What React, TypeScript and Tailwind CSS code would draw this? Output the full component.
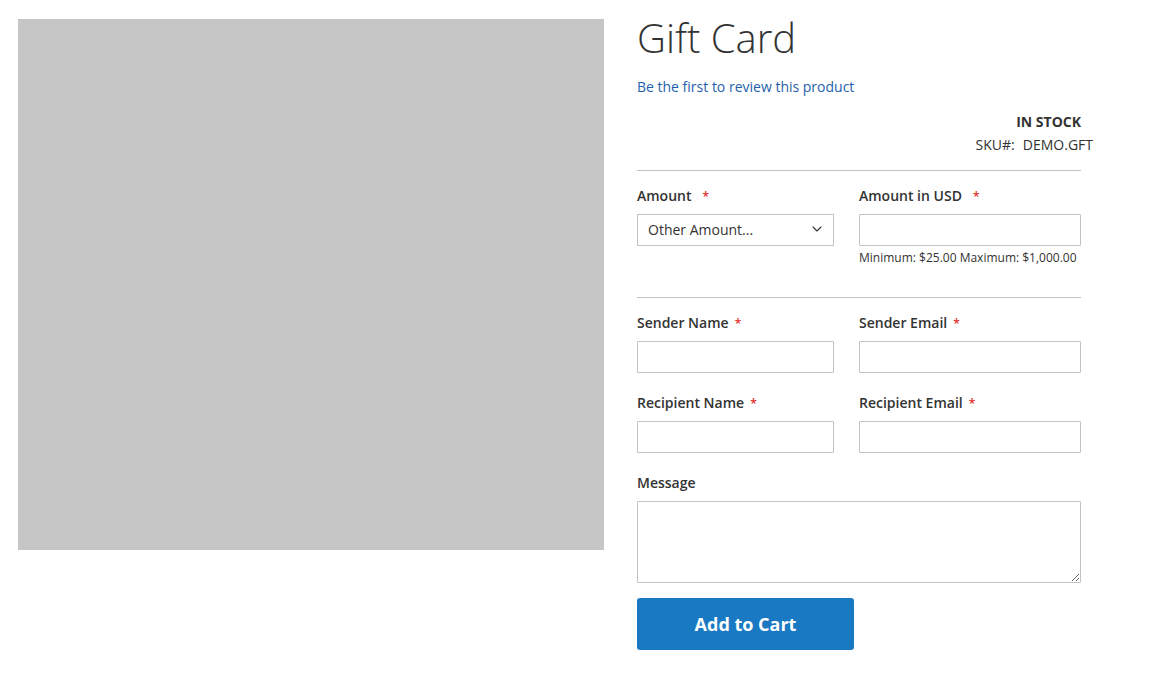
import { ChevronDown } from 'lucide-react';

function Label({ text, required = true, gap = 'ml-[9px]' }: { text: string; required?: boolean; gap?: string }) {
  return (
    <div className="h-5 text-[14px] leading-5 font-semibold text-[#333]">
      {text}
      {required && <span className={`${gap} text-[#e02b27] text-[12px]`}>*</span>}
    </div>
  );
}

function TextInput() {
  return <input type="text" className="block w-full h-8 border border-[#c2c2c2] rounded-[1px] bg-white px-2 text-[14px] outline-none" />;
}

export default function App() {
  return (
    <div className="min-h-[673px] bg-white text-[#333]" style={{ fontFamily: '"Open Sans", "Liberation Sans", sans-serif' }}>
      <div className="flex pl-[18px] pt-[19px]">
        {/* Product image placeholder */}
        <div className="w-[586px] h-[531px] bg-[#c6c6c6] shrink-0" />

        {/* Product info */}
        <div className="ml-[33px] w-[456px]">
          <h1 className="-mt-[3px] text-[40px] leading-[44px] font-light text-[#333]">Gift Card</h1>
          <a href="#" className="block mt-[17px] h-5 text-[14px] leading-5 text-[#1f5fab]">
            Be the first to review this product
          </a>

          <div className="w-[444px] mt-[15px] text-right text-[14px] leading-5 font-bold uppercase">In stock</div>
          <div className="mt-[3px] text-right text-[14px] leading-5">
            SKU#:<span className="ml-[8px]">DEMO.GFT</span>
          </div>

          <div className="w-[444px] mt-[15px] border-t border-[#c1c1c1]" />

          {/* Amount */}
          <div className="w-[444px] flex gap-[25px] mt-[15px]">
            <div className="w-[197px]">
              <Label text="Amount" gap="ml-[11px]" />
              <div className="mt-[8px] h-8 border border-[#c2c2c2] flex items-center justify-between pl-[10px] pr-[8px] pb-[2px] text-[14px]">
                <span>Other Amount...</span>
                <ChevronDown size={16} strokeWidth={1.6} className="text-[#333]" />
              </div>
            </div>
            <div className="flex-1">
              <Label text="Amount in USD" gap="ml-[11px]" />
              <div className="mt-[8px]">
                <TextInput />
              </div>
              <div className="mt-[4px] text-[12px] leading-4">Minimum: $25.00 Maximum: $1,000.00</div>
            </div>
          </div>

          <div className="w-[444px] mt-[31px] border-t border-[#c1c1c1]" />

          {/* Sender / recipient */}
          <div className="w-[444px] grid grid-cols-[197px_1fr] gap-x-[25px] mt-[15px]">
            <div>
              <Label text="Sender Name" gap="ml-[6px]" />
              <div className="mt-[8px]"><TextInput /></div>
            </div>
            <div>
              <Label text="Sender Email" gap="ml-[6px]" />
              <div className="mt-[8px]"><TextInput /></div>
            </div>
            <div className="mt-[20px]">
              <Label text="Recipient Name" gap="ml-[6px]" />
              <div className="mt-[8px]"><TextInput /></div>
            </div>
            <div className="mt-[20px]">
              <Label text="Recipient Email" gap="ml-[6px]" />
              <div className="mt-[8px]"><TextInput /></div>
            </div>
          </div>

          {/* Message */}
          <div className="w-[444px] mt-[20px]">
            <Label text="Message" required={false} />
            <textarea className="block mt-[8px] w-full h-[82px] border border-[#c2c2c2] rounded-[1px] bg-white outline-none resize-y" />
          </div>

          <button className="mt-[15px] w-[217px] h-[52px] rounded-[3px] bg-[#1979c3] text-white text-[18px] font-bold">
            Add to Cart
          </button>
        </div>
      </div>
    </div>
  );
}
